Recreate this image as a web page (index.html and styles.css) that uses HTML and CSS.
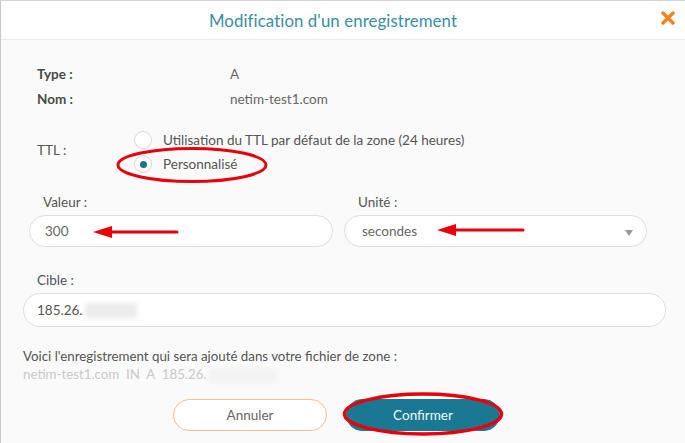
FILE: index.html
```html
<!DOCTYPE html>
<html lang="fr">
<head>
<meta charset="utf-8">
<title>Modification d'un enregistrement</title>
<link rel="stylesheet" href="styles.css">
</head>
<body>
<div class="modal">
  <div class="header">
    <h1 class="title">Modification d'un enregistrement</h1>
    <span class="close" aria-label="Fermer">
      <svg width="14" height="14" viewBox="0 0 14 14"><path d="M2 2 L12 12 M12 2 L2 12" stroke="#f5821f" stroke-width="3.4" stroke-linecap="round"/></svg>
    </span>
  </div>
  <div class="body">
    <div class="info">
      <div class="info-row"><span class="info-label">Type :</span><span class="info-value">A</span></div>
      <div class="info-row"><span class="info-label">Nom :</span><span class="info-value">netim-test1.com</span></div>
    </div>
    <div class="ttl">
      <span class="ttl-label">TTL :</span>
      <div class="radios">
        <label class="radio-row"><span class="radio"></span><span>Utilisation du TTL par défaut de la zone (24 heures)</span></label>
        <label class="radio-row"><span class="radio checked"></span><span>Personnalisé</span></label>
      </div>
    </div>
    <div class="pair">
      <div class="field">
        <div class="field-label">Valeur :</div>
        <div class="input input-valeur">300</div>
      </div>
      <div class="field">
        <div class="field-label">Unité :</div>
        <div class="input select">secondes<span class="caret"></span></div>
      </div>
    </div>
    <div class="field cible">
      <div class="field-label">Cible :</div>
      <div class="input input-cible">185.26.<span class="blur blur-a"></span></div>
    </div>
    <p class="note">Voici l'enregistrement qui sera ajouté dans votre fichier de zone :</p>
    <p class="record">netim-test1.com&nbsp;&nbsp;IN&nbsp;&nbsp;A&nbsp;&nbsp;185.26.<span class="blur blur-b"></span></p>
    <div class="actions">
      <button class="btn btn-cancel">Annuler</button>
      <button class="btn btn-confirm">Confirmer</button>
    </div>
  </div>
  <svg class="annot" width="685" height="443" viewBox="0 0 685 443">
    <ellipse cx="192" cy="165" rx="74" ry="16.5" fill="none" stroke="#e8000b" stroke-width="3"/>
    <line x1="108" y1="232" x2="177" y2="232" stroke="#e8000b" stroke-width="3" stroke-linecap="round"/>
    <polygon points="93,232 112,226 112,238" fill="#e8000b"/>
    <line x1="452" y1="230" x2="523" y2="230" stroke="#e8000b" stroke-width="3" stroke-linecap="round"/>
    <polygon points="437,230 456,224 456,236" fill="#e8000b"/>
    <ellipse cx="423" cy="414" rx="78.5" ry="20" fill="none" stroke="#e8000b" stroke-width="3.5"/>
  </svg>
</div>
</body>
</html>
```
FILE: styles.css
```css
* { box-sizing: border-box; }
html, body { margin: 0; padding: 0; }
body {
  font-family: Lato, "Open Sans", sans-serif;
  color: #555;
  background: #fafafa;
}
.modal {
  position: relative;
  width: 685px;
  height: 443px;
  border-left: 1px solid #c9c9c9;
  border-top: 1px solid #d6d6d6;
  background: #fafafa;
  overflow: hidden;
}
.header {
  height: 39px;
  background: #fff;
  border-bottom: 1px solid #ebebeb;
  display: flex;
  align-items: center;
  justify-content: center;
  padding-right: 20px;
  position: relative;
}
.title {
  margin: 0;
  font-size: 16.8px;
  font-weight: 400;
  color: #3a8ea4;
  letter-spacing: 0.1px;
}
.close {
  position: absolute;
  right: 10px;
  top: 10px;
  display: flex;
}
.body {
  padding: 21px 19px 0 22px;
}
.info { padding-left: 14px; }
.info-row {
  display: flex;
  height: 25px;
  align-items: center;
  font-size: 13.5px;
}
.info-label {
  width: 193px;
  font-weight: 700;
  color: #4a4a4a;
}
.info-value { color: #666; }
.ttl {
  display: flex;
  align-items: center;
  margin-top: 17px;
  padding-left: 14px;
  font-size: 13.5px;
}
.ttl-label {
  width: 97px;
  padding-bottom: 5px;
  color: #555;
}
.radios { display: flex; flex-direction: column; }
.radio-row {
  display: flex;
  align-items: center;
  height: 24px;
  gap: 11px;
  color: #555;
}
.radio {
  width: 18px;
  height: 18px;
  border-radius: 50%;
  border: 1px solid #d8d8d8;
  background: #fff;
  display: flex;
  align-items: center;
  justify-content: center;
}
.radio.checked::after {
  content: "";
  width: 7px;
  height: 7px;
  border-radius: 50%;
  background: #1c7590;
}
.pair {
  display: grid;
  grid-template-columns: 304px 303px;
  gap: 11px;
  margin-top: 18px;
  padding-left: 6px;
}
.field-label {
  padding-left: 14px;
  height: 16px;
  line-height: 16px;
  font-size: 13.5px;
  color: #555;
}
.input {
  margin-top: 5px;
  height: 32px;
  border: 1px solid #dedede;
  border-radius: 16px;
  background: #fff;
  display: flex;
  align-items: center;
  font-size: 13.5px;
  color: #666;
  position: relative;
}
.input-valeur { padding-left: 15px; }
.select { padding-left: 17px; }
.caret {
  position: absolute;
  right: 13px;
  top: 14px;
  width: 0;
  height: 0;
  border-left: 4.5px solid transparent;
  border-right: 4.5px solid transparent;
  border-top: 6px solid #999;
}
.cible { margin-top: 25px; }
.input-cible {
  height: 34px;
  border-radius: 17px;
  padding-left: 13px;
  color: #555;
}
.blur {
  display: inline-block;
  filter: blur(2px);
}
.blur-a {
  width: 52px;
  height: 15px;
  background: #ececec;
  margin-left: 2px;
}
.blur-b {
  width: 68px;
  height: 13px;
  background: #f2f2f2;
  margin-left: 2px;
  vertical-align: middle;
}
.note {
  margin: 21px 0 0;
  font-size: 13.3px;
  line-height: 16px;
  color: #555;
}
.record {
  margin: 2px 0 0;
  font-size: 13.3px;
  line-height: 16px;
  color: #c9c9c9;
}
.actions {
  display: flex;
  gap: 19px;
  margin-top: 17px;
  padding-left: 150px;
}
.btn {
  width: 154px;
  height: 32px;
  border-radius: 16px;
  font-family: Lato, "Open Sans", sans-serif;
  font-size: 13.5px;
  cursor: pointer;
}
.btn-cancel {
  background: #fff;
  border: 1px solid #f5bf94;
  color: #666;
}
.btn-confirm {
  background: #1b7893;
  border: 1px solid #1b7893;
  color: #eef6f8;
}
.annot {
  position: absolute;
  left: -1px;
  top: -1px;
  pointer-events: none;
}
```
